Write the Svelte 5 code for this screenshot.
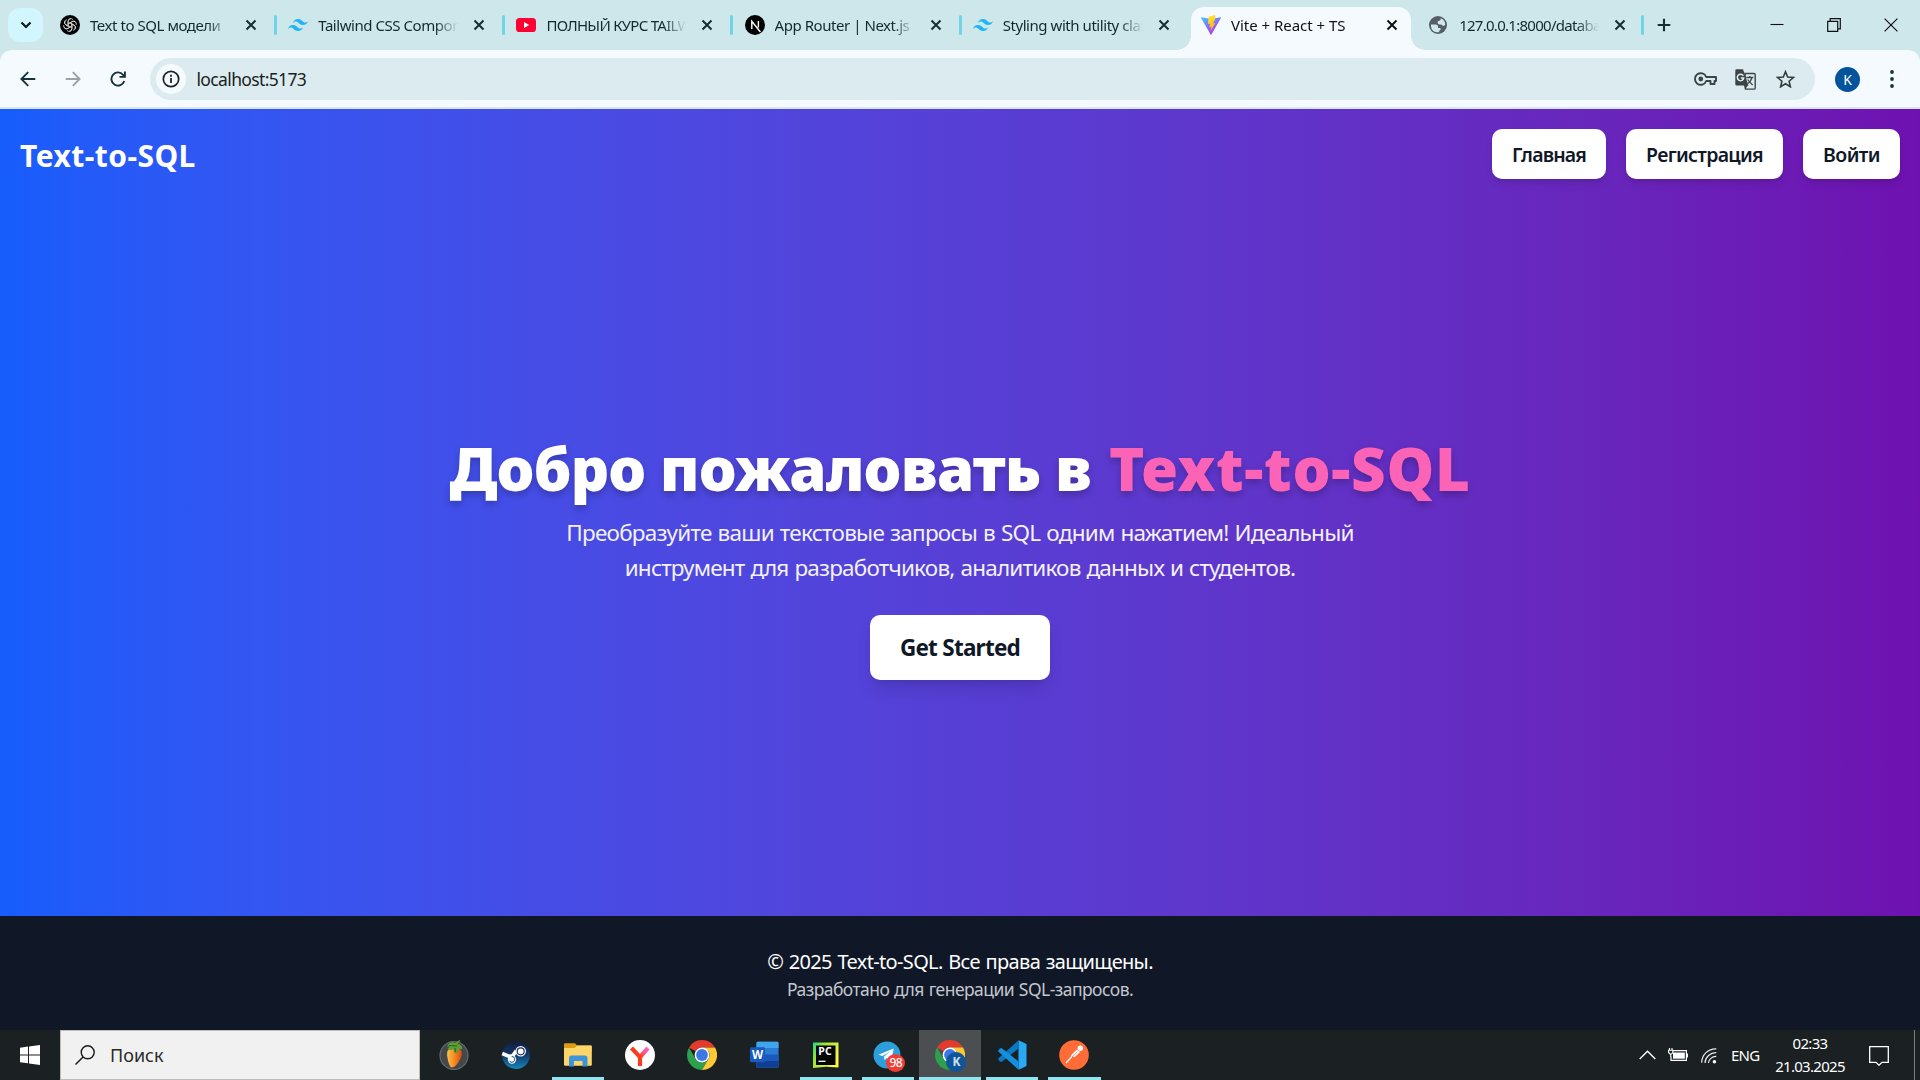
<script>
  const tabs = [
    { title: 'Text to SQL модели', icon: 'gpt', fit: 'snug' },
    { title: 'Tailwind CSS Components', icon: 'tailwind', fit: 'snug' },
    { title: 'ПОЛНЫЙ КУРС TAILWIND', icon: 'youtube', fit: 'tight' },
    { title: 'App Router | Next.js', icon: 'next', fit: 'snug' },
    { title: 'Styling with utility classes', icon: 'tailwind', fit: 'snug' },
    { title: 'Vite + React + TS', icon: 'vite', fit: 'plain', active: true },
    { title: '127.0.0.1:8000/database', icon: 'globe', fit: 'tight' }
  ];
  const nav = [
    { label: 'Главная', size: 'home' },
    { label: 'Регистрация', size: 'signup' },
    { label: 'Войти', size: 'login' }
  ];
  const apps = [
    { id: 'fl' }, { id: 'steam' }, { id: 'folder', open: true }, { id: 'yandex' }, { id: 'chrome' }, { id: 'word' },
    { id: 'pycharm', open: true }, { id: 'telegram', open: true }, { id: 'chromek', open: true, current: true },
    { id: 'vscode', open: true }, { id: 'postman', open: true }
  ];
</script>

{#snippet chrome()}
  <path d="M2.01 7.5A15 15 0 0 1 28 7.5H15a7.5 7.5 0 0 0-6.5 3.75z" fill="#e33b2e" />
  <path d="M2.01 7.5A15 15 0 0 0 15 30l6.5-11.25A7.5 7.5 0 0 1 8.5 18.75z" fill="#2da04e" />
  <path d="M28 7.5A15 15 0 0 1 15 30l6.5-11.25A7.5 7.5 0 0 0 21.5 11.25L15 7.5z" fill="#fcc934" />
  <circle cx="15" cy="15" r="7.4" fill="#fff" />
  <circle cx="15" cy="15" r="5.9" fill="#3b78e7" />
{/snippet}

<div class="screen">
  <header class="tabstrip">
    <div class="tab-search"><svg width="12" height="8" viewBox="0 0 12 8"><path d="M1.5 1.5 6 6l4.5-4.5" fill="none" stroke="#0b1b1e" stroke-width="2.2" /></svg></div>
    {#each tabs as tab, i}
      <div class={['tab', tab.active && 'active']}>
        <svg class="fav" width="20" height="20" viewBox="0 0 20 20">
          {#if tab.icon === 'gpt'}
            <circle cx="10" cy="10" r="10" fill="#050505" />
            <g fill="none" stroke="#d9d9d9" stroke-width=".85">
              {#each [0, 60, 120, 180, 240, 300] as a}
                <path transform="rotate({a} 10 10)" d="M8.1 11.1V6.4a2.8 2.8 0 0 1 4.9-1.8M8.1 8.9l4-2.3a2.8 2.8 0 0 1 3.8 1" />
              {/each}
            </g>
          {:else if tab.icon === 'tailwind'}
            <path transform="scale(.8333)" d="M12 4.8c-3.2 0-5.2 1.6-6 4.8 1.2-1.6 2.6-2.2 4.2-1.8.913.228 1.565.89 2.288 1.624C13.666 10.618 15.027 12 18 12c3.2 0 5.2-1.6 6-4.8-1.2 1.6-2.6 2.2-4.2 1.8-.913-.228-1.565-.89-2.288-1.624C16.337 6.182 14.976 4.8 12 4.8zM6 12c-3.2 0-5.2 1.6-6 4.8 1.2-1.6 2.6-2.2 4.2-1.8.913.228 1.565.89 2.288 1.624C7.666 17.818 9.027 19.2 12 19.2c3.2 0 5.2-1.6 6-4.8-1.2 1.6-2.6 2.2-4.2 1.8-.913-.228-1.565-.89-2.288-1.624C10.337 13.382 8.976 12 6 12z" fill="#1fb6f5" />
          {:else if tab.icon === 'youtube'}
            <rect y="3" width="20" height="14" rx="3.6" fill="#ff0033" /><path d="m8 7 5.2 3L8 13z" fill="#fff" />
          {:else if tab.icon === 'next'}
            <circle cx="10" cy="10" r="10" fill="#000" />
            <path d="M6.8 14V6.3L15.4 17M13.4 6v6.6" fill="none" stroke="#fff" stroke-width="1.4" />
          {:else if tab.icon === 'vite'}
            <defs>
              <linearGradient id="va" x1="0" y1="0" x2=".6" y2="1"><stop stop-color="#41c8ff" /><stop offset="1" stop-color="#b32cfe" /></linearGradient>
              <linearGradient id="vb" x1=".3" y1="0" x2=".6" y2="1"><stop stop-color="#ffe83a" /><stop offset="1" stop-color="#ffa800" /></linearGradient>
            </defs>
            <path d="M.5 2.2 10 4l9.5-1.8q.6 0 .4.7L10.4 19.4q-.4.6-.8 0L.1 2.9q-.2-.7.4-.7z" fill="url(#va)" />
            <path d="m14.2.1-6.5 1.3-.8 7.5 2.3-.3-.8 3.8 1.9-.5-.9 4.6L14.4 8l-2.4.4 2.2-4.2z" fill="url(#vb)" />
          {:else}
            <circle cx="9" cy="10" r="9" fill="#565e63" />
            <path d="M2 9.500h4.500q2.500 0 2.500 2v1.500h2.500v2q-1.500 0-1.500 2.300Q3 17.800 2 11.800zM11.800 3.300q4 1.500 4.500 6.200-1 2-2.500 1.300-.8-1.300-2.800-1.300-2.500 0-2.500-2.300 0-1.500 1.800-1.500 1.500 0 1.500-2.400z" fill="#cee7eb" />
          {/if}
        </svg>
        <span class={['title', tab.fit]}>{tab.title}</span>
        <svg class="x" width="12" height="12" viewBox="0 0 12 12"><path d="m1.5 1.5 9 9m0-9-9 9" stroke="currentColor" stroke-width="2" /></svg>
        <i class={['sep', (tab.active || tabs[i + 1]?.active) && 'hidden', i === tabs.length - 1 && 'last']}></i>
      </div>
    {/each}
    <svg class="plus" width="14" height="14" viewBox="0 0 14 14"><path d="M7 .7v12.6M.7 7h12.6" stroke="#142f34" stroke-width="2.1" /></svg>
    <div class="window">
      <svg width="14" height="14" viewBox="0 0 14 14"><path d="M.5 6.5h13" stroke="#111" stroke-width="1.1" /></svg>
      <svg width="14" height="14" viewBox="0 0 14 14"><path d="M.7 3.3h10v10h-10zM3.2 3V.7h10.1v10.1H11" fill="none" stroke="#111" stroke-width="1.2" /></svg>
      <svg width="14" height="14" viewBox="0 0 14 14"><path d="m.6.6 12.8 12.8m0-12.8L.6 13.4" stroke="#111" stroke-width="1.2" /></svg>
    </div>
  </header>

  <div class="toolbar">
    <svg class="back" width="16" height="16" viewBox="0 0 16 16"><path d="M15.3 8H1.5m6.7-6.8L1.4 8l6.8 6.8" fill="none" stroke="#14333a" stroke-width="1.9" /></svg>
    <svg class="forward" width="16" height="16" viewBox="0 0 16 16"><path d="M.7 8h13.8M7.8 1.2 14.6 8l-6.8 6.8" fill="none" stroke="#9ba2a5" stroke-width="1.9" /></svg>
    <svg class="reload" width="16" height="16" viewBox="0 0 16 16"><path d="M14.3 10A6.6 6.6 0 1 1 13.4 4.200L14.6 5.500M14.900.5v5.400H9.500" fill="none" stroke="#14333a" stroke-width="1.9" /></svg>
    <div class="omnibox">
      <span class="info"><svg width="18" height="18" viewBox="0 0 18 18"><circle cx="9" cy="9" r="7.7" fill="none" stroke="#1d2426" stroke-width="1.7" /><path d="M9 8v5M9 4.800v2" stroke="#1d2426" stroke-width="1.8" /></svg></span>
      <span class="url">localhost:5173</span>
      <svg class="key" width="23" height="14" viewBox="0 0 23 14"><path d="M12.200 5A5.800 5.800 0 1 0 12.200 9h4.300v3h4v-3H22V5z" fill="none" stroke="#3c4446" stroke-width="1.900" stroke-linejoin="round" /><circle cx="6.800" cy="7" r="2.400" fill="#3c4446" /></svg>
      <svg class="translate" width="21" height="21" viewBox="0 0 21 21">
        <path d="M10 4.500h9q1.200 0 1.200 1.200v13.200q0 1.200-1.200 1.200h-8.500z" fill="none" stroke="#3c4446" stroke-width="1.400" />
        <path d="M1.500.3H8l1.300 3.800 4.200 12.400H1.500Q.3 16.500.3 15.300V1.500Q.3.3 1.500.3zM9 16.500h4L10 20z" fill="#3c4446" />
        <path d="M8.300 6.800A3.200 3.200 0 1 0 8.700 9H5.800" fill="none" stroke="#dcebef" stroke-width="1.500" />
        <path d="M11.300 8.500h7M14.800 7v1.500M17 8.500q-1 4-4 6M12.700 10.500q2 3 5 5.500" fill="none" stroke="#3c4446" stroke-width="1.300" />
      </svg>
      <svg class="star" width="19" height="18" viewBox="0 0 19 18"><path d="m9.500 1.700 2.200 5.300 5.700.5-4.300 3.700 1.300 5.600-4.900-3-4.900 3 1.300-5.600L1.600 7.500 7.300 7z" fill="none" stroke="#343d3f" stroke-width="1.600" /></svg>
    </div>
    <span class="avatar">K</span>
    <svg class="dots" width="4" height="18" viewBox="0 0 4 18" fill="#17363c"><circle cx="2" cy="2" r="1.900" /><circle cx="2" cy="9" r="1.900" /><circle cx="2" cy="16" r="1.900" /></svg>
  </div>

  <div class="site">
    <nav>
      <strong class="brand">Text-to-SQL</strong>
      <div class="links">
        {#each nav as n}<button class={n.size}>{n.label}</button>{/each}
      </div>
    </nav>
    <main>
      <h1>Добро пожаловать в <span>Text-to-SQL</span></h1>
      <p>Преобразуйте ваши текстовые запросы в SQL одним нажатием! Идеальный<br /><span>инструмент для разработчиков, аналитиков данных и студентов.</span></p>
      <button class="cta">Get Started</button>
    </main>
  </div>
  <footer>
    <p>© 2025 Text-to-SQL. Все права защищены.</p>
    <small>Разработано для генерации SQL-запросов.</small>
  </footer>

  <div class="taskbar">
    <div class="start"><svg width="20" height="20" viewBox="0 0 20 20" fill="#fff"><path d="M0 2.700 8 1.600V9.400H0zM9 1.400 20 0v9.400H9zM0 10.400h8v7.900L0 17.200zM9 10.400h11V20L9 18.500z" /></svg></div>
    <div class="search">
      <svg width="20" height="20" viewBox="0 0 20 20"><circle cx="12.700" cy="7.300" r="6.500" fill="none" stroke="#1b1b1b" stroke-width="1.400" /><path d="M8 12 .5 19.500" stroke="#1b1b1b" stroke-width="1.500" /></svg>
      <span>Поиск</span>
    </div>
    <div class="apps">
      {#each apps as app}
        <div class={['app', app.open && 'open', app.current && 'current']}>
          <svg width="30" height="30" viewBox="0 0 30 30">
            {#if app.id === 'fl'}
              <defs><linearGradient id="fl" x1="0" x2="1"><stop stop-color="#ffc04a" /><stop offset=".5" stop-color="#f68a22" /><stop offset="1" stop-color="#d9490f" /></linearGradient></defs>
              <circle cx="15" cy="15.500" r="14" fill="#43484a" stroke="#666b6d" stroke-width="1.200" />
              <path d="M8.500 11q3-4.500 7-2 5-1.500 7 2 1.200 5-3 11-3 5-6.500 5.500-2.500-.5-4-7Q7.500 14 8.500 11z" fill="url(#fl)" />
              <path d="M8 6.500q3-6 8-3.500L20.500 0l.8.800-3 3.200q5 0 5 5.500-3-1-3.500-.500 0 3.500-2.800 4.500-2.500-1-2.500-4.500-3.500 2-6-.500l2.500-2z" fill="#5a9e34" />
              <path d="m10 5.500 8 .5M16 8l.5 4" stroke="#2e641c" stroke-width="1.200" />
            {:else if app.id === 'steam'}
              <defs><linearGradient id="st" x1="0" y1="0" x2="0" y2="1"><stop stop-color="#141b3c" /><stop offset=".5" stop-color="#123a68" /><stop offset="1" stop-color="#1488bd" /></linearGradient></defs>
              <circle cx="15" cy="15" r="14" fill="url(#st)" />
              <path d="m1.200 13.500 7.300 3q1.500-.8 3.200-.6l3.500-5" fill="none" stroke="#fff" stroke-width="3.600" />
              <circle cx="19.700" cy="11.300" r="5.300" fill="#fff" /><circle cx="19.700" cy="11.300" r="3.500" fill="none" stroke="#1d355e" stroke-width="1.200" />
              <circle cx="11" cy="19.500" r="4.200" fill="#fff" /><path d="M8.500 21a2.900 2.900 0 1 0 2.200-4.500" fill="none" stroke="#1a4776" stroke-width="1" />
            {:else if app.id === 'folder'}
              <path d="M1 4.200q0-1 1-1h10l2 2.300h13.500q1 0 1 1V12H1z" fill="#dc9d12" />
              <path d="M1 8h10.500L14 5.500h14q.8 0 .8.800v18.500q0 1-1 1H2q-1 0-1-1z" fill="#fdd568" />
              <path d="M6 26.500V18q0-2.500 2.500-2.500H22q2.500 0 2.500 2.500v8.500h-5V21h-8.500v5.500z" fill="#3b94dc" />
            {:else if app.id === 'yandex'}
              <circle cx="15" cy="15" r="15" fill="#fff" />
              <defs><linearGradient id="ya" gradientUnits="userSpaceOnUse" x1="14" y1="17" x2="23" y2="6"><stop stop-color="#fc3f1d" /><stop offset=".55" stop-color="#f95a92" /><stop offset="1" stop-color="#f26af2" /></linearGradient></defs>
              <path d="m15 17 8-9" stroke="url(#ya)" stroke-width="4.200" /><path d="m6.500 8 8.500 9v9" fill="none" stroke="#fb3c1f" stroke-width="4.200" />
            {:else if app.id === 'chrome'}
              {@render chrome()}
            {:else if app.id === 'word'}
              <rect x="7.500" y="1.800" width="22" height="26" rx="1.200" fill="#2b7cd3" />
              <path d="M7.500 8V3q0-1.200 1.200-1.200h19.600q1.200 0 1.200 1.200v5z" fill="#41a5ee" /><path d="M7.500 14.500h22V21h-22z" fill="#185abd" /><path d="M7.500 21h22v5.600q0 1.200-1.200 1.200H8.700q-1.200 0-1.200-1.200z" fill="#103f91" />
              <rect x="1" y="7.300" width="15" height="15" rx="1.200" fill="#185abd" />
              <text x="8.500" y="19" text-anchor="middle" class="glyph" font-size="11.500">W</text>
            {:else if app.id === 'pycharm'}
              <defs><linearGradient id="pc" x1="0" y1="0" x2="1" y2=".6"><stop stop-color="#21d789" /><stop offset=".35" stop-color="#9be533" /><stop offset="1" stop-color="#fcf84a" /></linearGradient></defs>
              <path d="M2 2.500h25.500v25L15 26.800 2 28z" fill="url(#pc)" /><rect x="5" y="5.500" width="19.500" height="19.500" fill="#050505" />
              <text x="14" y="15.300" text-anchor="middle" class="glyph" font-size="10.500">PC</text><path d="M7.500 21.300h7" stroke="#fff" stroke-width="1.300" />
            {:else if app.id === 'telegram'}
              <circle cx="14" cy="15" r="13.500" fill="#2ba0da" />
              <path d="m5.500 14.800 15.200-6.300-2.500 12.500-4.500-3-2.200 2.200-.5-3.800 6-5-7.500 4.500z" fill="#fff" />
            {:else if app.id === 'chromek'}
              {@render chrome()}
            {:else if app.id === 'vscode'}
              <path d="M21.500.300 29.500 4v22l-8 3.800z" fill="#29a9f3" />
              <path d="M21.500.300 1 18.800l1.500 2.500 2 .8L21.500 8.500z" fill="#0b78c4" /><path d="M21.500 29.800 1 11.200l1.500-2.500 2-.8L21.500 21.500z" fill="#1590df" />
            {:else}
              <circle cx="15" cy="15" r="14.800" fill="#ff6c37" />
              <path d="m7 23 8.500-9.500" stroke="#fff" stroke-width="1.200" /><path d="m11.800 15.500 6-6 3.200 2.500-5.500 5.200z" fill="#fff" /><path d="m13 17 5.500-5.500" stroke="#ff6c37" stroke-width=".7" /><circle cx="21.300" cy="8.300" r="2.700" fill="#fff" />
            {/if}
          </svg>
          {#if app.id === 'telegram'}<b class="badge count">98</b>{/if}
          {#if app.id === 'chromek'}<b class="badge profile">K</b>{/if}
        </div>
      {/each}
    </div>
    <div class="tray">
      <svg width="17" height="10" viewBox="0 0 17 10"><path d="m.7 9 7.800-7.800L16.300 9" fill="none" stroke="#fff" stroke-width="1.400" /></svg>
      <svg class="battery" width="20" height="14" viewBox="0 0 20 14"><path d="M5 2.600h13.400v9.800H3V8.500M19.400 5.500v4" fill="none" stroke="#fff" stroke-width="1.200" /><path d="M5 4.500h11.800v6.200H5z" fill="#fff" /><path d="M1.500 0v2M4 0v2M.6 2.300h4.200v2.200L3.500 6H2L.6 4.500zM2.700 6v3" fill="none" stroke="#fff" stroke-width="1.100" /></svg>
      <svg class="wifi" width="16" height="16" viewBox="0 0 16 16"><g fill="none" stroke="#e9eaea" stroke-width="1.200"><path d="M.7 14.800A14 14 0 0 1 15.300.8M4 15A10.800 10.800 0 0 1 15.300 4.700M7.400 15A7.500 7.500 0 0 1 15.300 8.400" /></g><circle cx="13.400" cy="13.700" r="1.800" fill="#fff" /></svg>
      <span class="lang">ENG</span>
      <div class="clock"><span>02:33</span><span>21.03.2025</span></div>
      <svg class="note" width="20" height="20" viewBox="0 0 20 20"><path d="M.7.700h18.600v15.600H13L10 19.200l-3-2.900H.7z" fill="none" stroke="#fff" stroke-width="1.300" /></svg>
      <i class="peek"></i>
    </div>
  </div>
</div>

<style>
  :global(body) { margin: 0; overflow: hidden; }
  .screen { width: 1920px; height: 1080px; display: flex; flex-direction: column; overflow: hidden; font-family: 'Noto Sans', 'Open Sans', sans-serif; }
  .screen * { box-sizing: border-box; }
  svg { display: block; flex: none; }
  p, h1 { margin: 0; }
  button { border: 0; font-family: inherit; background: #fff; color: #101828; padding: 0; white-space: nowrap; }

  .tabstrip { position: relative; z-index: 1; height: 50px; flex: none; background: #cee7eb; display: flex; align-items: flex-start; }
  .tab-search { width: 35px; height: 34px; margin: 8px 4px 0 8px; border-radius: 12px; background: #d2f6fe; display: flex; align-items: center; justify-content: center; flex: none; }
  .tab { width: 228.2px; height: 50px; flex: none; display: flex; align-items: center; padding-left: 13px; color: #142f34; position: relative; }
  .fav { z-index: 1; }
  .title { flex: none; width: 141px; margin-left: 10px; overflow: hidden; white-space: nowrap; font-size: 15px; line-height: 24px; color: #102a2e; z-index: 1; -webkit-mask-image: linear-gradient(90deg, #000 117px, transparent 140px); mask-image: linear-gradient(90deg, #000 117px, transparent 140px); }
  .snug { letter-spacing: -.45px; }
  .tight { letter-spacing: -.72px; }
  .plain { letter-spacing: -.02px; }
  .x { margin-left: 14px; z-index: 1; }
  .sep { flex: none; width: 3px; height: 20px; margin-left: 17px; margin-right: -2px; border-radius: 2px; background: #6fd4e8; }
  .sep.hidden { visibility: hidden; }
  .sep.last { margin-left: 15px; }
  .active, .active .title { color: #111; }
  .active::before { content: ''; position: absolute; left: 3px; top: 7px; width: 220px; height: 43px; border-radius: 13px 13px 0 0; background: #f5fafe; }
  .active::after { content: ''; position: absolute; left: -11px; bottom: 0; width: 248px; height: 14px; background: radial-gradient(circle at 0 0, transparent 13.500px, #f5fafe 14px) left / 14px 14px no-repeat, radial-gradient(circle at 100% 0, transparent 13.500px, #f5fafe 14px) right / 14px 14px no-repeat; }
  .plus { margin: 18px 0 0 12.400px; }
  .window { margin: 18px 22px 0 auto; display: flex; gap: 43px; }

  .toolbar { position: relative; height: 59px; flex: none; background: linear-gradient(#f5fafe, #f5fafe) 0 0 / 100% 57px no-repeat, #d9e6ea; display: flex; align-items: center; padding-bottom: 1px; border-radius: 12px 12px 0 0; box-shadow: 0 -12px 0 #cee7eb; }
  .back { margin-left: 20px; }
  .forward { margin-left: 29px; }
  .reload { margin-left: 29px; }
  .omnibox { width: 1665px; height: 42px; margin-left: 24px; border-radius: 21px; background: #dcebef; display: flex; align-items: center; }
  .info { width: 30px; height: 30px; margin-left: 6px; border-radius: 50%; background: #f5fafe; display: flex; align-items: center; justify-content: center; }
  .url { margin-left: 10.500px; margin-right: auto; font-size: 17.500px; letter-spacing: -.64px; color: #1b1f21; }
  .key { margin-right: 18px; }
  .translate { margin-right: 20px; }
  .star { margin-right: 20px; }
  .avatar { width: 25px; height: 25px; margin-left: 20px; border-radius: 50%; background: #03549c; color: #fff; font-size: 14px; line-height: 25px; text-align: center; }
  .dots { margin-left: 30px; }

  .site { height: 807px; flex: none; background: linear-gradient(to right, #155dfc, #6e11b0); background: linear-gradient(to right in oklab, #155dfc, #6e11b0); color: #fff; }
  nav { height: 90px; padding: 20px 20px 0; display: flex; justify-content: space-between; align-items: flex-start; }
  .brand { font-size: 30px; line-height: 50px; font-weight: 700; letter-spacing: .45px; margin-top: 2px; }
  .links { display: flex; gap: 20px; }
  .links button { height: 50px; border-radius: 10px; font-size: 19.500px; font-weight: 600; box-shadow: 0 5px 8px -1px #0000001a, 0 2px 5px -2px #0000001a; padding-top: 1px; }
  .home { width: 114px; letter-spacing: -.85px; }
  .signup { width: 157px; letter-spacing: -.7px; }
  .login { width: 97px; letter-spacing: -.6px; }
  main { padding-top: 239px; display: flex; flex-direction: column; align-items: center; text-align: center; }
  h1 { font-size: 60px; line-height: 60px; font-weight: 900; letter-spacing: -.800px; white-space: nowrap; text-shadow: 0 4px 7px #00000038; }
  h1 span { color: #fb64b6; letter-spacing: .7px; margin-left: 3px; }
  main p { margin-top: 17px; font-size: 22.500px; line-height: 35px; letter-spacing: -.75px; word-spacing: .85px; color: #f3f1fc; white-space: nowrap; }
  main p span { letter-spacing: -.79px; }
  .cta { width: 180px; height: 65px; margin-top: 30px; border-radius: 10px; font-size: 22.500px; font-weight: 700; letter-spacing: -.75px; box-shadow: 0 12px 18px -4px #0000001f, 0 5px 8px -5px #0000001f; }

  footer { height: 114px; flex: none; background: #101828; color: #fff; text-align: center; display: flex; flex-direction: column; align-items: center; padding-top: 31px; }
  footer p { font-size: 20px; line-height: 30px; letter-spacing: -.66px; word-spacing: 1.100px; }
  footer small { font-size: 17.500px; line-height: 25px; letter-spacing: -.55px; word-spacing: .8px; color: #c3c6cc; }

  .taskbar { height: 50px; flex: none; background: #1b2023; display: flex; color: #fff; }
  .start { width: 60px; display: flex; align-items: center; justify-content: center; }
  .search { width: 360px; background: #f1f1f1; border: 1px solid #bcbcbc; display: flex; align-items: center; color: #2a2a2a; font-size: 18px; padding-left: 14px; gap: 15px; }
  .apps { display: flex; padding-left: 3px; }
  .app { width: 62.050px; height: 50px; display: flex; align-items: center; justify-content: center; position: relative; }
  .app.open::after { content: ''; position: absolute; left: 5px; right: 5px; bottom: 0; height: 3px; background: #8fe6f2; }
  .app.current { background: #4b4f51; }
  .app.current::after { left: 0; right: 0; }
  .badge { position: absolute; border-radius: 50%; text-align: center; color: #fff; }
  .count { left: 29px; top: 24px; width: 19px; height: 18px; background: #f23c34; font-size: 12px; line-height: 18px; font-weight: 500; letter-spacing: -.5px; }
  .profile { left: 27px; top: 22px; width: 20px; height: 20px; background: #0f5599; font-size: 12px; line-height: 20px; color: #cfe0f0; }
  .glyph { fill: #fff; font-family: 'Noto Sans', sans-serif; font-weight: 700; }
  .tray { margin-left: auto; display: flex; align-items: center; height: 50px; }
  .battery { margin-left: 12px; }
  .wifi { margin-left: 13px; margin-top: 2px; }
  .lang { width: 28px; margin-left: 14px; font-size: 15px; letter-spacing: -.8px; white-space: nowrap; }
  .clock { width: 72px; margin-left: 15px; display: flex; flex-direction: column; align-items: center; font-size: 15px; line-height: 23px; letter-spacing: -.7px; }
  .note { margin-left: 23px; margin-top: 1px; }
  .peek { width: 1px; height: 50px; margin: 0 5px 0 25px; background: #7b7f81; }
</style>
